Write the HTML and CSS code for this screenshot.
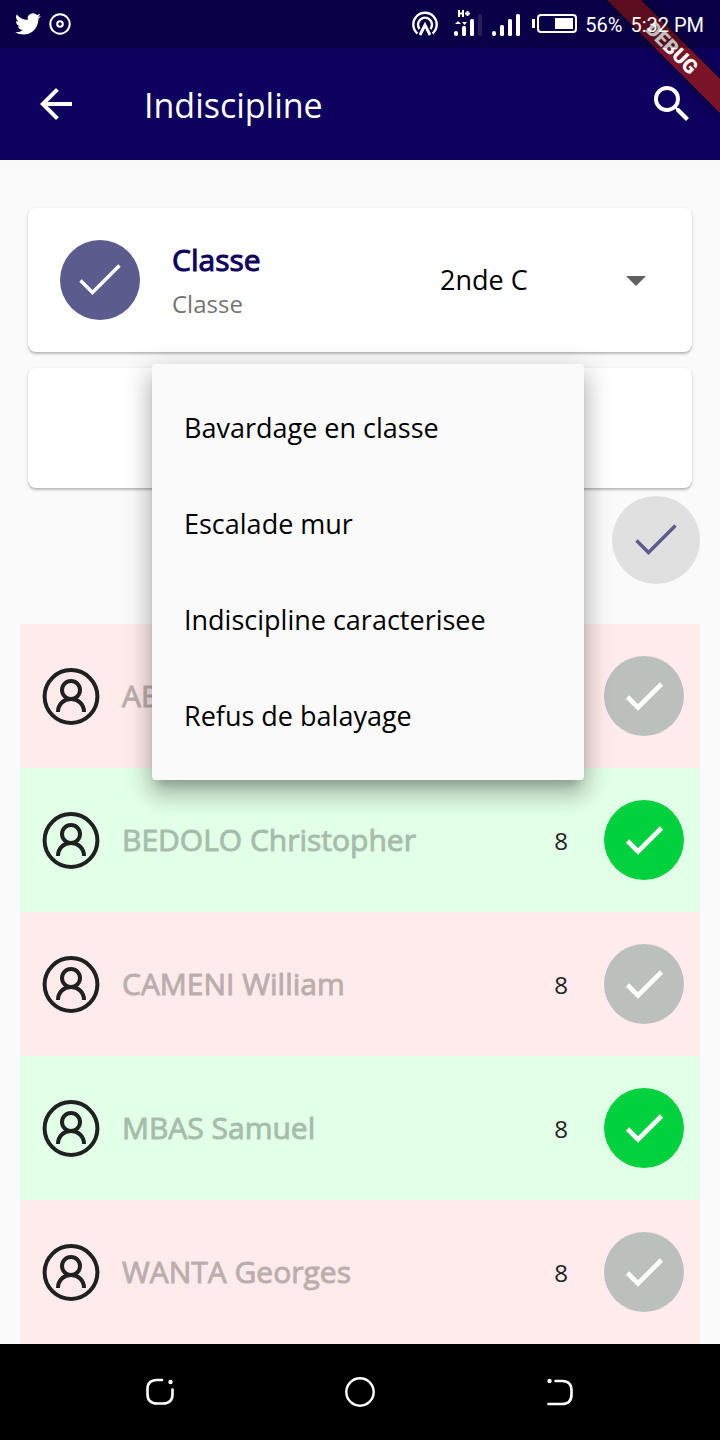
FILE: index.html
```html
<!DOCTYPE html>
<html lang="fr">
<head>
<meta charset="utf-8">
<meta name="viewport" content="width=device-width, initial-scale=1">
<title>Indiscipline</title>
<link rel="stylesheet" href="styles.css">
</head>
<body>
<svg class="defs" aria-hidden="true">
  <symbol id="avatar" viewBox="0 0 62 62"><g fill="none" stroke="#1e211f" stroke-width="4"><circle cx="31" cy="31.500" r="26.400"/><circle cx="31" cy="25" r="9"/><path d="M18 47C18 39 24 34 31 34s13 5 13 13"/></g></symbol>
  <symbol id="check" viewBox="0 0 80 80"><path d="M23.500 41 34 51.500 57.500 28" fill="none" stroke="#fff" stroke-width="4.600"/></symbol>
  <symbol id="check-thin" viewBox="0 0 80 80"><path d="M20.500 40.500 32.500 52.500 59.500 25.500" fill="none" stroke="currentColor" stroke-width="3.400"/></symbol>
</svg>
<div class="screen">
  <header class="top">
    <div class="debug">DEBUG</div>
    <div class="status">
      <svg width="26" height="24" viewBox="0 0 24 22"><path fill="#fff" d="M23.950 3.570a10 10 0 0 1-2.820.775 4.960 4.960 0 0 0 2.160-2.720c-.95.550-2 .950-3.130 1.180a4.920 4.920 0 0 0-8.380 4.480C7.690 7.100 4.070 5.130 1.640 2.160a4.820 4.820 0 0 0-.67 2.480c0 1.710.87 3.210 2.190 4.100a4.900 4.900 0 0 1-2.230-.62v.06a4.920 4.920 0 0 0 3.950 4.830 5 5 0 0 1-2.210.08 4.940 4.940 0 0 0 4.600 3.420A9.870 9.870 0 0 1 0 18.540a14 14 0 0 0 7.550 2.210c9.050 0 14-7.500 14-13.980 0-.21 0-.42-.02-.63a9.940 9.940 0 0 0 2.420-2.570z"/></svg>
      <svg width="22" height="22" viewBox="0 0 22 22" fill="none" stroke="#fff" stroke-width="2"><circle cx="11" cy="11" r="9.700"/><circle cx="11" cy="11" r="2.800"/></svg>
      <span class="spacer"></span>
      <svg width="26" height="26" viewBox="0 0 26 26" fill="none" stroke="#fff" stroke-width="2.400"><path d="M5.500 22.500A11.700 11.700 0 1 1 20.500 22.500"/><path d="M7.500 18A7 7 0 1 1 18.500 18"/><path d="M8 24 13 14l5 10" stroke-width="2.800"/></svg>
      <svg class="cell" width="66" height="32" viewBox="0 0 66 32"><g stroke="#fff" stroke-width="2" fill="none"><path d="M5 2v7M9 2v7M5 5.500h4M13.500 3v5M11 5.500h5"/></g><g fill="#fff"><path d="m1 16 3-3 3 3zM8 14h5l-2.500 3z"/><rect y="23" width="4" height="5" rx="2"/><rect x="8" y="18" width="4" height="10" rx="1.500"/><rect x="16" y="11" width="4" height="17" rx="1.500"/><rect x="24" y="6" width="4" height="22" rx="1.500" opacity=".12"/><rect x="38" y="23" width="4" height="5" rx="2"/><rect x="46" y="17" width="4" height="11" rx="1.500"/><rect x="54" y="11" width="4" height="17" rx="1.500"/><rect x="62" y="6" width="4" height="22" rx="1.500"/></g></svg>
      <svg width="45" height="20" viewBox="0 0 45 20"><rect x="0" y="5" width="3" height="9" fill="#fff"/><rect x="6" y="1" width="38" height="17" rx="3" fill="none" stroke="#fff" stroke-width="2"/><rect x="23" y="4" width="18" height="11" fill="#fff"/></svg>
      <span class="clock">56%</span>
      <span class="clock">5:32 PM</span>
    </div>
    <div class="bar">
      <button class="icon" aria-label="Retour"><svg width="48" height="48" viewBox="0 0 24 24"><path fill="#fff" d="M20 11H7.830l5.590-5.590L12 4l-8 8 8 8 1.410-1.410L7.830 13H20v-2z"/></svg></button>
      <h1>Indiscipline</h1>
      <button class="icon" aria-label="Rechercher"><svg width="48" height="48" viewBox="0 0 24 24"><path fill="#fff" d="M15.500 14h-.79l-.28-.27A6.471 6.471 0 0 0 16 9.500 6.500 6.500 0 1 0 9.500 16c1.610 0 3.090-.59 4.230-1.570l.27.28v.79l5 4.990L20.490 19l-4.990-5zm-6 0C7.010 14 5 11.990 5 9.500S7.010 5 9.500 5 14 7.010 14 9.500 11.990 14 9.500 14z"/></svg></button>
    </div>
  </header>
  <main>
    <section class="card class-card">
      <span class="disc indigo"><svg><use href="#check-thin"/></svg></span>
      <div class="labels">
        <label class="strong" for="classe">Classe</label>
        <span class="sub">Classe</span>
      </div>
      <div class="drop">
        <select id="classe"><option>2nde C</option></select>
        <svg width="20" height="12" viewBox="0 0 20 12"><path d="M0 2h20L10 12z" fill="#616161"/></svg>
      </div>
    </section>
    <section class="card reason-card">
      <div class="menu">
        <button>Bavardage en classe</button>
        <button>Escalade mur</button>
        <button>Indiscipline caracterisee</button>
        <button>Refus de balayage</button>
      </div>
    </section>
    <div class="actions"><button class="disc submit" aria-label="Valider"><svg><use href="#check-thin"/></svg></button></div>
    <ul class="students">
      <li><svg class="avatar"><use href="#avatar"/></svg><span class="name">ABE</span><button class="disc" aria-label="Cocher"><svg><use href="#check"/></svg></button></li>
      <li><svg class="avatar"><use href="#avatar"/></svg><span class="name">BEDOLO Christopher</span><span class="count">8</span><button class="disc on" aria-label="Décocher"><svg><use href="#check"/></svg></button></li>
      <li><svg class="avatar"><use href="#avatar"/></svg><span class="name">CAMENI William</span><span class="count">8</span><button class="disc" aria-label="Cocher"><svg><use href="#check"/></svg></button></li>
      <li><svg class="avatar"><use href="#avatar"/></svg><span class="name">MBAS Samuel</span><span class="count">8</span><button class="disc on" aria-label="Décocher"><svg><use href="#check"/></svg></button></li>
      <li><svg class="avatar"><use href="#avatar"/></svg><span class="name">WANTA Georges</span><span class="count">8</span><button class="disc" aria-label="Cocher"><svg><use href="#check"/></svg></button></li>
    </ul>
  </main>
  <nav class="system">
    <button aria-label="Applications récentes"><svg width="32" height="32" viewBox="0 0 32 32" fill="none" stroke="#fff" stroke-width="2.600" stroke-linecap="round"><path d="M18 4h-5Q3.500 4 3.500 13v5Q3.500 27.500 13 27.500h6Q28.500 27.500 28.500 18v-4.500"/><circle cx="26.500" cy="6" r="2.200" fill="#fff" stroke="none"/></svg></button>
    <button aria-label="Accueil"><svg width="32" height="32" viewBox="0 0 32 32"><circle cx="16" cy="16" r="13.700" fill="none" stroke="#fff" stroke-width="2.400"/></svg></button>
    <button aria-label="Retour système"><svg width="32" height="32" viewBox="0 0 32 32" fill="none" stroke="#fff" stroke-width="2.600" stroke-linecap="round"><path d="M11.500 5H18q9.500 0 9.500 9.500v4q0 9.500-9.500 9.500H4.500"/><circle cx="5.500" cy="5" r="2.200" fill="#fff" stroke="none"/></svg></button>
  </nav>
</div>
</body>
</html>
```
FILE: styles.css
```css
* { box-sizing: border-box; }
body { margin: 0; background: #fafafa; font-family: "Open Sans", "Noto Sans", sans-serif; color: #000; }
button { border: 0; padding: 0; background: none; font: inherit; color: inherit; cursor: pointer; }
svg { display: block; flex: none; }
.defs { position: absolute; width: 0; height: 0; }
.screen { min-height: 100vh; display: flex; flex-direction: column; }

.top { position: relative; overflow: hidden; background: #0e005f; color: #fff; }
.status { position: relative; z-index: 2; height: 48px; padding: 0 16px 0 15px; display: flex; align-items: center; background: rgba(0, 0, 0, .25); font: 20px/24px Roboto, sans-serif; gap: 8px; }
.spacer { flex: 1; }
.cell { margin: 0 4px 0 8px; }
.clock { padding-top: 2px; }
.debug { position: absolute; top: 36px; right: -32px; width: 160px; height: 24px; background: #7a1228; transform: rotate(45deg); box-shadow: 0 0 12px rgba(0, 0, 0, .5); font: 900 20px/24px Roboto, sans-serif; text-align: center; }
.bar { height: 112px; padding: 0 24px 0 32px; display: flex; align-items: center; }
.icon { width: 48px; height: 48px; }
h1 { flex: 1; margin: 0 0 0 64px; padding-top: 2px; font-size: 34px; line-height: 48px; font-weight: 400; }

main { flex: 1; padding: 48px 20px 0; }
.card { margin: 0 8px 16px; background: #fff; border-radius: 8px; box-shadow: 0 2px 2px rgba(0, 0, 0, .2), 0 1px 4px rgba(0, 0, 0, .1); }
.class-card { height: 144px; padding: 0 32px; display: flex; align-items: center; gap: 32px; }
.disc { flex: none; width: 80px; height: 80px; border-radius: 50%; display: grid; place-items: center; background: #bbc0bc; }
.disc svg { width: 80px; height: 80px; }
.disc.indigo { background: #5c5b8d; color: #fff; }
.disc.on { background: #00d13d; }
.disc.submit { width: 88px; height: 88px; background: #e0e0e0; color: #5c5b8d; }
.labels { flex: 1; display: flex; flex-direction: column; gap: 4px; padding-top: 4px; }
.strong, .name { font-size: 30px; line-height: 40px; -webkit-text-stroke: 1px currentColor; }
.strong { color: #0e005f; }
.sub { font-size: 24px; line-height: 40px; color: #757575; }
.drop { width: 220px; display: flex; align-items: center; padding-right: 14px; }
.drop select { appearance: none; flex: 1; min-width: 0; border: 0; padding: 0; background: none; font: 27px/40px "Open Sans", sans-serif; color: #000; }

.reason-card { position: relative; height: 120px; margin-bottom: 8px; }
.menu { position: absolute; z-index: 5; top: -4px; left: 124px; right: 108px; padding: 16px 0; background: #fafafa; border-radius: 4px; box-shadow: 0 10px 10px -6px rgba(0, 0, 0, .2), 0 16px 20px 2px rgba(0, 0, 0, .14), 0 6px 28px 4px rgba(0, 0, 0, .16); }
.menu button { display: block; width: 100%; height: 96px; padding: 0 32px; text-align: left; font-size: 27px; line-height: 40px; white-space: nowrap; }
.actions { display: flex; justify-content: flex-end; margin-bottom: 40px; }

.students { list-style: none; margin: 0; padding: 0; }
.students li { height: 144px; padding: 0 16px 0 20px; display: flex; align-items: center; background: #ffebeb; }
.students li:nth-child(even) { background: #e2ffe7; }
.avatar { width: 62px; height: 62px; }
.name { flex: 1; margin-left: 20px; opacity: .26; }
.count { margin-right: 36px; padding-top: 2px; font-size: 24px; line-height: 40px; color: #222; }

.system { height: 96px; padding: 0 60px; display: flex; background: #000; }
.system button { flex: 1; display: grid; place-items: center; }
```
